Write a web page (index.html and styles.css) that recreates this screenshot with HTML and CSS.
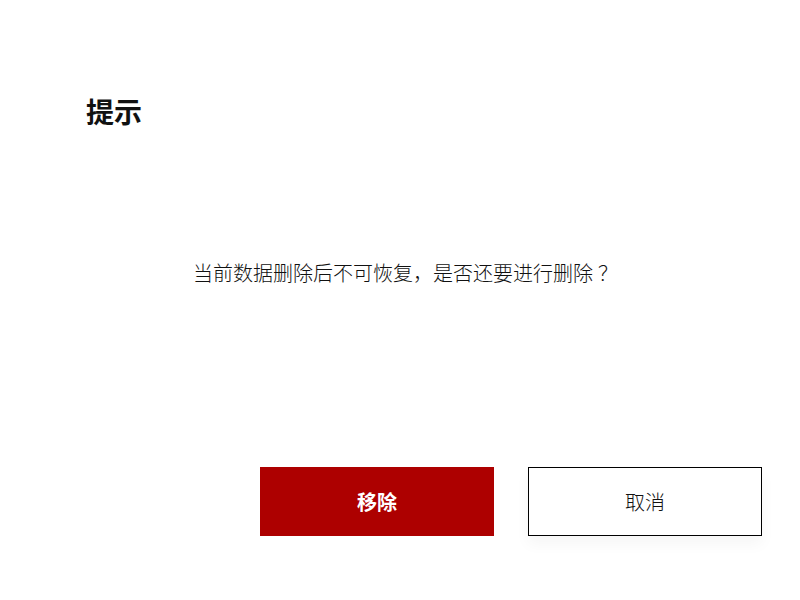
FILE: index.html
```html
<!DOCTYPE html>
<html lang="zh">
<head>
<meta charset="utf-8">
<link rel="stylesheet" href="styles.css">
</head>
<body>
<div class="dialog">
  <div class="title">提示</div>
  <div class="message">当前数据删除后不可恢复，是否还要进行删除<span class="punct">？</span></div>
  <div class="actions">
    <button class="btn btn-primary">移除</button>
    <button class="btn btn-secondary">取消</button>
  </div>
</div>
</body>
</html>
```
FILE: styles.css
```css
html, body {
  margin: 0;
  padding: 0;
  background: #ffffff;
}
body {
  width: 800px;
  height: 600px;
  font-family: "Noto Sans CJK SC", "Noto Sans", sans-serif;
  color: #111;
}
.dialog {
  display: flex;
  flex-direction: column;
  padding: 92px 38px 0 86px;
}
.title {
  font-size: 28px;
  font-weight: bold;
  line-height: 38px;
  height: 38px;
}
.message {
  margin-top: 128px;
  font-size: 20px;
  font-weight: 300;
  line-height: 30px;
  text-align: center;
  color: #111;
  margin-left: -86px;
  margin-right: -38px;
  padding-left: 6px;
}
.punct {
  padding-left: 5px;
  margin-right: -5px;
}
.actions {
  margin-top: 179px;
  display: flex;
  justify-content: flex-end;
  gap: 34px;
}
.btn {
  width: 234px;
  height: 69px;
  font-family: "Noto Sans CJK SC", "Noto Sans", sans-serif;
  font-size: 20px;
  border: none;
  padding: 0;
  cursor: pointer;
}
.btn-primary {
  background: #ad0000;
  color: #fff;
  font-weight: bold;
}
.btn-secondary {
  background: #fff;
  color: #111;
  font-weight: 300;
  border: 1px solid #000;
  box-shadow: 0 8px 14px rgba(0, 0, 0, 0.04);
}
```
